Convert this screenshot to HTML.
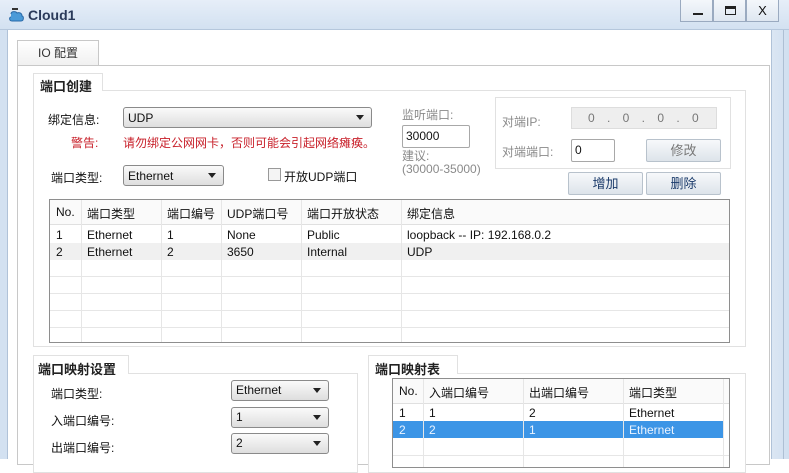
<!DOCTYPE html>
<html><head><meta charset="utf-8"><style>
*{margin:0;padding:0;box-sizing:border-box}
body{width:789px;height:459px;overflow:hidden;background:#fff;font-family:"Liberation Sans","Noto Sans CJK SC",sans-serif;font-size:12px;color:#111;position:relative}
.a{position:absolute}
.title{left:0;top:0;width:789px;height:30px;background:linear-gradient(#e6eef8,#d3e1f1);border-bottom:1px solid #b5c7dc}
.lb{left:0;top:30px;width:8px;height:429px;background:#d3e1f1;border-right:1px solid #b0c2d8}
.rb{left:771px;top:30px;width:18px;height:429px;background:linear-gradient(90deg,#dbe6f3,#d0dff0);border-left:1px solid #b0c2d8}
.rb:after{content:"";position:absolute;left:11px;top:0;width:1px;height:100%;background:#aebfd4}
.btnw{top:0;height:22px;border:1px solid #9aaac0;border-top:none;background:linear-gradient(#f4f7fb,#dfe7f1)}
.grp{border:1px solid #e1e1e1;background:#fff}
.glab{font-weight:bold;font-size:13px;color:#222}
.sel{border:1px solid #8a8a8a;border-radius:3px;background:linear-gradient(#fafafa,#dedede);padding-left:4px;line-height:18px}
.sel:after{content:"";position:absolute;right:7px;top:7px;border-left:4px solid transparent;border-right:4px solid transparent;border-top:5px solid #222}
.inp{border:1px solid #a8a8a8;border-radius:2px;background:#fff;padding-left:3px;line-height:20px}
.btn{border:1px solid #b8c2cc;border-radius:2px;background:linear-gradient(#f7f9fb,#dde4ea);text-align:center;line-height:21px;color:#1a3a6a;font-size:13px}
.tbl{border:1px solid #8e8e8e;background:#fff;overflow:hidden}
.hl{position:absolute;left:0;width:100%;height:1px;background:#e6e6e6}
.vl{position:absolute;top:0;width:1px;height:100%;background:#e6e6e6}
.gray{color:#8a8a8a}
</style></head><body>
<div class="a title"></div>
<svg class="a" style="left:8px;top:6px" width="18" height="18" viewBox="0 0 18 18"><path d="M4 3h6" stroke="#333" stroke-width="2"/><path d="M3 8c0-3 5-3 6-1 2-1 5 0 5 3 2 0 2 5-1 5H4c-3 0-3-4-1-4" fill="#4a9ad8" stroke="#2a6aa8"/></svg>
<div class="a" style="left:28px;top:7px;font-weight:bold;font-size:14px;color:#2a3a5a">Cloud1</div>
<div class="a btnw" style="left:680px;width:33px"><div class="a" style="left:12px;top:13px;width:10px;height:2px;background:#222"></div></div>
<div class="a btnw" style="left:713px;width:33px"><div class="a" style="left:11px;top:6px;width:11px;height:9px;border:1px solid #222;border-top:3px solid #222"></div></div>
<div class="a btnw" style="left:746px;width:33px;text-align:center;line-height:22px;font-size:13px">X</div>
<div class="a lb"></div><div class="a rb"></div>
<div class="a" style="left:17px;top:40px;width:82px;height:26px;border:1px solid #c8c8c8;border-bottom:none;background:linear-gradient(#fff,#f0f0f0);text-align:center;line-height:24px;font-size:12px;color:#333">IO 配置</div>
<div class="a" style="left:17px;top:65px;width:753px;height:400px;border:1px solid #c8c8c8;border-right:1px solid #c8c8c8"></div>
<!-- group 1 -->
<div class="a grp" style="left:33px;top:90px;width:713px;height:257px"></div>
<div class="a" style="left:33px;top:73px;width:70px;height:18px;border:1px solid #e1e1e1;border-bottom:none;background:#fff"></div>
<div class="a glab" style="left:40px;top:76px">端口创建</div>
<div class="a" style="left:48px;top:111px">绑定信息:</div>
<div class="a sel" style="left:123px;top:107px;width:249px;height:21px;line-height:20px">UDP</div>
<div class="a" style="left:71px;top:134px;color:#c8202a">警告:</div>
<div class="a" style="left:123px;top:134px;color:#c8202a">请勿绑定公网网卡，否则可能会引起网络瘫痪。</div>
<div class="a" style="left:51px;top:169px">端口类型:</div>
<div class="a sel" style="left:123px;top:165px;width:101px;height:21px;line-height:20px">Ethernet</div>
<div class="a" style="left:268px;top:168px;width:13px;height:13px;border:1px solid #999;background:#f4f4f4"></div>
<div class="a" style="left:284px;top:168px">开放UDP端口</div>
<div class="a gray" style="left:402px;top:106px">监听端口:</div>
<div class="a inp" style="left:402px;top:125px;width:68px;height:23px">30000</div>
<div class="a gray" style="left:402px;top:150px;line-height:13px">建议:<br>(30000-35000)</div>
<div class="a" style="left:495px;top:97px;width:236px;height:72px;border:1px solid #e1e1e1"></div>
<div class="a gray" style="left:502px;top:113px">对端IP:</div>
<div class="a" style="left:571px;top:107px;width:146px;height:22px;background:#eee;border:1px solid #ddd;color:#777;letter-spacing:0;word-spacing:9px;padding-left:16px;line-height:20px">0 . 0 . 0 . 0</div>
<div class="a gray" style="left:502px;top:143px">对端端口:</div>
<div class="a inp" style="left:571px;top:139px;width:44px;height:23px">0</div>
<div class="a btn" style="left:646px;top:139px;width:75px;height:23px;color:#777">修改</div>
<div class="a btn" style="left:568px;top:172px;width:75px;height:23px">增加</div>
<div class="a btn" style="left:646px;top:172px;width:75px;height:23px">删除</div>
<div class="a tbl" style="left:49px;top:199px;width:681px;height:144px">
<div class="a" style="left:0;top:0;width:100%;height:25px;background:#fafafa;border-bottom:1px solid #e0e0e0"></div>
<div class="a" style="left:0;top:43px;width:100%;height:17px;background:#f0f0f0"></div>
<div class="hl" style="top:76px"></div><div class="hl" style="top:93px"></div><div class="hl" style="top:110px"></div><div class="hl" style="top:127px"></div>
<div class="vl" style="left:31px"></div><div class="vl" style="left:111px"></div><div class="vl" style="left:171px"></div><div class="vl" style="left:251px"></div><div class="vl" style="left:351px"></div>
<div class="a" style="left:6px;top:5px">No.</div>
<div class="a" style="left:6px;top:27px;line-height:17px">1<br>2</div>
<div class="a" style="left:37px;top:5px">端口类型</div>
<div class="a" style="left:37px;top:27px;line-height:17px">Ethernet<br>Ethernet</div>
<div class="a" style="left:117px;top:5px">端口编号</div><div class="a" style="left:117px;top:27px;line-height:17px">1<br>2</div>
<div class="a" style="left:177px;top:5px">UDP端口号</div><div class="a" style="left:177px;top:27px;line-height:17px">None<br>3650</div>
<div class="a" style="left:257px;top:5px">端口开放状态</div><div class="a" style="left:257px;top:27px;line-height:17px">Public<br>Internal</div>
<div class="a" style="left:357px;top:5px">绑定信息</div><div class="a" style="left:357px;top:27px;line-height:17px">loopback -- IP: 192.168.0.2<br>UDP</div>
</div>
<!-- bottom left -->
<div class="a grp" style="left:33px;top:373px;width:325px;height:100px"></div>
<div class="a" style="left:33px;top:355px;width:96px;height:19px;border:1px solid #e1e1e1;border-bottom:none;background:#fff"></div>
<div class="a glab" style="left:38px;top:359px">端口映射设置</div>
<div class="a" style="left:51px;top:385px">端口类型:</div>
<div class="a" style="left:51px;top:412px">入端口编号:</div>
<div class="a" style="left:51px;top:439px">出端口编号:</div>
<div class="a sel" style="left:231px;top:380px;width:98px;height:21px">Ethernet</div>
<div class="a sel" style="left:231px;top:407px;width:98px;height:21px">1</div>
<div class="a sel" style="left:231px;top:433px;width:98px;height:21px">2</div>
<!-- bottom right -->
<div class="a grp" style="left:368px;top:373px;width:378px;height:100px"></div>
<div class="a" style="left:368px;top:355px;width:90px;height:19px;border:1px solid #e1e1e1;border-bottom:none;background:#fff"></div>
<div class="a glab" style="left:375px;top:359px">端口映射表</div>
<div class="a tbl" style="left:392px;top:378px;width:338px;height:90px">
<div class="a" style="left:0;top:0;width:100%;height:25px;background:#fafafa;border-bottom:1px solid #e0e0e0"></div>
<div class="a" style="left:0;top:42px;width:330px;height:17px;background:#3c95e6"></div>
<div class="hl" style="top:76px"></div>
<div class="vl" style="left:30px"></div><div class="vl" style="left:130px"></div><div class="vl" style="left:230px"></div><div class="vl" style="left:330px"></div>
<div class="a" style="left:6px;top:5px">No.</div><div class="a" style="left:36px;top:5px">入端口编号</div><div class="a" style="left:136px;top:5px">出端口编号</div><div class="a" style="left:236px;top:5px">端口类型</div>
<div class="a" style="left:6px;top:27px">1</div><div class="a" style="left:36px;top:27px">1</div><div class="a" style="left:136px;top:27px">2</div><div class="a" style="left:236px;top:27px">Ethernet</div>
<div class="a" style="left:6px;top:44px;color:#eaf3ff">2</div><div class="a" style="left:36px;top:44px;color:#eaf3ff">2</div><div class="a" style="left:136px;top:44px;color:#eaf3ff">1</div><div class="a" style="left:236px;top:44px;color:#eaf3ff">Ethernet</div>
</div>
</body></html>
